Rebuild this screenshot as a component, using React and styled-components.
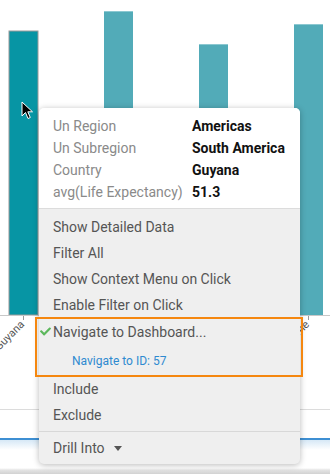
import styled, { createGlobalStyle } from "styled-components";
import { FaCheck } from "react-icons/fa";

const GlobalStyle = createGlobalStyle`
  html, body { margin: 0; padding: 0; background: #fff; }
  body { font-family: Roboto, "Liberation Sans", sans-serif; }
`;

const Page = styled.div`
  position: relative;
  width: 330px;
  height: 474px;
  overflow: hidden;
  background: #fff;
`;

const ChartSvg = styled.svg`
  display: block;
  width: 330px;
  height: 410px;
`;

const Strip = styled.div`
  height: 28px;
  border-bottom: 2px solid #3d8fd3;
`;

const Glow = styled.div`
  height: 10px;
  background: linear-gradient(#d6e8f6, #fff);
`;

const Bottom = styled.div`
  height: 24px;
  background: linear-gradient(#fff 0, #fff 18px, #e4e4e4 20px, #d2d2d2 24px);
`;

const Menu = styled.div`
  position: absolute;
  left: 39px;
  top: 108px;
  width: 261px;
  height: 356px;
  border-radius: 5px;
  overflow: hidden;
  background: #efefef;
  box-shadow: 0 1px 6px rgba(0, 0, 0, 0.28);
`;

const Info = styled.div`
  display: grid;
  grid-template-columns: 139px 1fr;
  grid-auto-rows: 22px;
  align-items: center;
  padding: 7px 0 5px 14px;
  background: #fff;
  border-bottom: 1px solid #dcdcdc;
  font-size: 14px;
`;

const Label = styled.span`
  color: #8a8a8a;
  white-space: nowrap;
`;

const Value = styled.span`
  color: #111;
  font-weight: 700;
  white-space: nowrap;
`;

const List = styled.div`
  padding: 5px 0 2px;
`;

const Item = styled.div`
  display: flex;
  align-items: center;
  height: ${(p) => p.$h || 26}px;
  padding-left: ${(p) => (p.$sub ? 33 : 14)}px;
  font-size: ${(p) => (p.$sub ? 12 : 14)}px;
  color: ${(p) => (p.$sub ? "#2e8ad0" : "#555")};
  white-space: nowrap;
`;

const Check = styled(FaCheck)`
  width: 11px;
  height: 11px;
  margin-left: -13px;
  margin-right: 2px;
  color: #5cb85c;
`;

const Divider = styled.div`
  height: 1px;
  margin: 3px 0;
  background: #d8d8d8;
`;

const Caret = styled.span`
  margin-left: 9px;
  border-left: 4px solid transparent;
  border-right: 4px solid transparent;
  border-top: 5px solid #555;
`;

const Highlight = styled.div`
  position: absolute;
  left: 35px;
  top: 317px;
  width: 264px;
  height: 56px;
  border: 2px solid #f5870f;
`;

const Cursor = styled.svg`
  position: absolute;
  left: 21px;
  top: 101px;
  width: 13px;
  height: 19px;
`;

const bars = [
  { name: "Guyana", x: 9, top: 31, color: "#0795a4", selected: true },
  { name: "Paraguay", x: 104, top: 11, color: "#52abb8" },
  { name: "Peru", x: 199, top: 44, color: "#52abb8" },
  { name: "Suriname", x: 294, top: 24, color: "#52abb8" },
];

const info = [
  ["Un Region", "Americas"],
  ["Un Subregion", "South America"],
  ["Country", "Guyana"],
  ["avg(Life Expectancy)", "51.3"],
];

export default function App() {
  return (
    <Page>
      <GlobalStyle />
      <ChartSvg viewBox="0 0 330 410">
        {bars.map((b) => (
          <g key={b.name}>
            <rect
              x={b.x}
              y={b.top}
              width={29}
              height={315 - b.top}
              fill={b.color}
              stroke={b.selected ? "#9a9a9a" : "none"}
              strokeWidth={b.selected ? 1 : 0}
            />
            {!b.selected && <rect x={b.x} y={b.top} width={29} height={1} fill="#8cc8d1" />}
            <line x1={b.x + 14.5} y1={315} x2={b.x + 14.5} y2={320} stroke="#999" />
            <text
              x={b.x + 16}
              y={325}
              fontSize="11"
              fill="#555"
              fontFamily="Roboto, sans-serif"
              textAnchor="end"
              transform={`rotate(-45 ${b.x + 16} 325)`}
            >
              {b.name}
            </text>
          </g>
        ))}
        <line x1={0} y1={315.5} x2={330} y2={315.5} stroke="#c8c8c8" />
        <line x1={0} y1={409.5} x2={330} y2={409.5} stroke="#dcdcdc" />
      </ChartSvg>
      <Strip />
      <Glow />
      <Bottom />

      <Cursor viewBox="0 0 13 19">
        <path d="M1 1 L1 15 L4.5 11.5 L7 17.5 L9.3 16.5 L6.8 10.8 L11.5 10.8 Z" fill="#000" stroke="#fff" strokeWidth="1" />
      </Cursor>

      <Menu>
        <Info>
          {info.map(([l, v]) => (
            <>
              <Label key={l}>{l}</Label>
              <Value key={v}>{v}</Value>
            </>
          ))}
        </Info>
        <List>
          <Item>Show Detailed Data</Item>
          <Item>Filter All</Item>
          <Item>Show Context Menu on Click</Item>
          <Item>Enable Filter on Click</Item>
          <Item $h={27}>
            <Check />
            Navigate to Dashboard...
          </Item>
          <Item $sub $h={31}>Navigate to ID: 57</Item>
          <Item>Include</Item>
          <Item>Exclude</Item>
          <Divider />
          <Item>
            Drill Into
            <Caret />
          </Item>
        </List>
      </Menu>
      <Highlight />
    </Page>
  );
}
